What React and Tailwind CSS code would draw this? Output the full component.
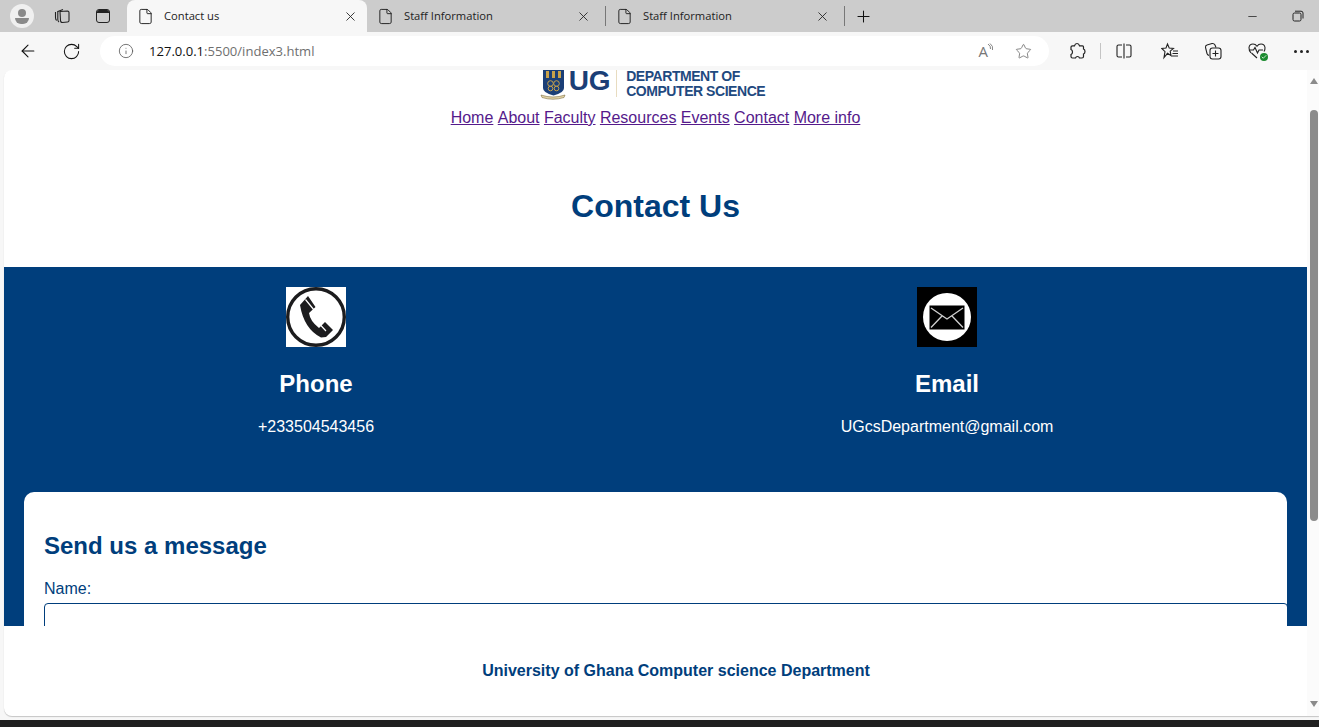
import React from 'react';
import { ArrowLeft, RotateCw, Info, File, X, Plus, Minus, Star, Check } from 'lucide-react';

const BLUE = 'text-[#003e7c]';

function Tab({ title, active, sep }) {
  return (
    <div className={`flex items-center h-[32px] relative ${active ? 'w-[240px] bg-[#f7f7f7] rounded-t-lg pl-[10px] pr-[9px]' : 'w-[239px] pl-[10px] pr-[15px]'}`}>
      <File size={17} strokeWidth={1.3} className="text-[#1a1a1a] shrink-0" />
      <span className="ml-[10px] text-[11.2px] text-[#222] flex-1 font-['Open_Sans',sans-serif]">{title}</span>
      <X size={15} strokeWidth={1.4} className="text-[#222]" />
      {sep && <div className="absolute right-0 top-[6px] h-[20px] w-px bg-[#777]"></div>}
    </div>
  );
}

function CollectionsIcon() {
  return (
    <svg width="18" height="18" viewBox="0 0 18 18" fill="none" stroke="#222" strokeWidth="1.1">
      <path d="M7 4.5 L14.5 4 Q16 4 16 5.5 L16 13.5 Q16 15 14.5 15 L9.5 15.5 Q7.5 15.5 7.5 13.5 Z" />
      <path d="M4.8 4 L4.8 12.5 Q4.8 14 6 15" />
      <path d="M2.5 5 L2.5 10.5 Q2.5 12.5 3.6 13.5" />
      <path d="M4.8 4.5 L10 2.5" />
    </svg>
  );
}

function Crest() {
  return (
    <svg width="26" height="30" viewBox="0 0 26 30" className="block shrink-0">
      <path d="M3 0 H24 V18 Q24 23 13.5 25.5 Q3 23 3 18 Z" fill="#1b3f77" />
      <rect x="6" y="1" width="3" height="7" fill="#c8a24a" />
      <rect x="12" y="1" width="3" height="7" fill="#c8a24a" />
      <rect x="18" y="1" width="3" height="7" fill="#c8a24a" />
      <circle cx="10.5" cy="13.5" r="2.8" fill="none" stroke="#c8a24a" strokeWidth="1" />
      <circle cx="16.5" cy="13.5" r="2.8" fill="none" stroke="#c8a24a" strokeWidth="1" />
      <circle cx="10.5" cy="18.5" r="2.3" fill="none" stroke="#c8a24a" strokeWidth="1" />
      <circle cx="16.5" cy="18.5" r="2.3" fill="none" stroke="#c8a24a" strokeWidth="1" />
      <path d="M1 25 Q13 29 25 25 L24 27.5 Q13 31 2 27.5 Z" fill="#e3d4a8" stroke="#6b5a2a" strokeWidth="0.5" />
    </svg>
  );
}

function PhoneTile() {
  return (
    <svg width="60" height="60" viewBox="0 0 60 60" className="block">
      <rect width="60" height="60" fill="#fff" />
      <circle cx="30" cy="30" r="28.3" fill="none" stroke="#1c1c1e" strokeWidth="3.4" />
      <path d="M14 18 L22 9 L29.5 20 L23 26 Q24 34 33 41 L39 35 L47 43 L40 50 L35 50.5 Q18 42 14 18 Z" fill="#1c1c1e" />
      <path d="M19.5 12.5 L28 23 M33.5 37 L40 44" stroke="#fff" strokeWidth="1.2" />
    </svg>
  );
}

function MailTile() {
  return (
    <svg width="60" height="60" viewBox="0 0 60 60" className="block">
      <rect width="60" height="60" fill="#000" />
      <circle cx="30" cy="30" r="24" fill="#fff" />
      <rect x="12.5" y="18.5" width="35" height="24" fill="#000" />
      <path d="M14 21 L30 32 L46 21 M14 40.5 L25 29 M46 40.5 L35 29" fill="none" stroke="#d0d0d0" strokeWidth="1.3" />
    </svg>
  );
}

function BrowserChrome() {
  return (
    <>
      <div className="h-[32px] bg-[#cccccc] flex items-end shrink-0">
        <div className="w-[127px] h-[32px] flex items-center shrink-0">
          <div className="ml-[10px] w-[24px] h-[24px] rounded-full bg-[#f0f0f0] flex flex-col items-center justify-center">
            <div className="w-[8px] h-[8px] rounded-full bg-[#8a8a8a]"></div>
            <div className="w-[14px] h-[6px] mt-[1px] rounded-b-full rounded-t-sm bg-[#8a8a8a]"></div>
          </div>
          <div className="ml-[19px]"><CollectionsIcon /></div>
          <div className="ml-[25px] w-[14px] h-[14px] border border-[#222] rounded-[3px] overflow-hidden">
            <div className="h-[3px] bg-[#222]"></div>
          </div>
        </div>
        <Tab title="Contact us" active />
        <Tab title="Staff Information" sep />
        <Tab title="Staff Information" sep />
        <div className="h-[32px] flex items-center ml-[9px] shrink-0">
          <Plus size={19} strokeWidth={1.3} className="text-[#111]" />
        </div>
        <div className="flex-1"></div>
        <div className="h-[32px] flex items-center pr-[15px] gap-[33px] shrink-0">
          <Minus size={13} strokeWidth={1.3} className="text-[#111]" />
          <svg width="12" height="12" viewBox="0 0 12 12" fill="none" stroke="#222" strokeWidth="1">
            <rect x="1" y="3" width="8" height="8" rx="1.5" />
            <path d="M3 1.2 H9 Q11 1.2 11 3 V8.5" />
          </svg>
        </div>
      </div>

      <div className="h-[38px] bg-[#f7f7f7] flex items-center shrink-0">
        <div className="w-[100px] flex items-center shrink-0">
          <ArrowLeft size={20} strokeWidth={1.3} className="ml-[18px] text-[#111]" />
          <RotateCw size={19} strokeWidth={1.3} className="ml-[24px] text-[#111]" />
        </div>
        <div className="w-[949px] h-[30px] bg-white rounded-full flex items-center shrink-0">
          <Info size={16} strokeWidth={1.2} className="ml-[18px] text-[#555]" />
          <span className="ml-[15px] pt-[1px] text-[13.05px] text-[#6f6f6f] flex-1 font-['Open_Sans',sans-serif]">
            <span className="text-[#111]">127.0.0.1</span>:5500/index3.html
          </span>
          <span className="relative text-[15px] leading-none text-[#777] font-['Open_Sans',sans-serif]">A
            <svg width="7" height="9" viewBox="0 0 7 9" fill="none" stroke="#777" strokeWidth="0.9" className="absolute -right-[6px] -top-[1px]">
              <path d="M1 1 Q4 3 3.5 6 M3 0.5 Q6.5 3 5.5 7" />
            </svg>
          </span>
          <Star size={17} strokeWidth={1.1} className="ml-[27px] mr-[17px] text-[#666]" />
        </div>
        <div className="flex items-center shrink-0">
          <svg width="18" height="18" viewBox="0 0 18 18" fill="none" stroke="#222" strokeWidth="1.2" className="ml-[19px]">
            <path d="M6.5 3.8 Q7 1.5 9 1.5 Q11 1.5 11.5 3.8 H14.5 Q15.5 3.8 15.5 5 V7 Q17 7.5 17 9.5 Q17 11.5 15.5 12 V14.5 Q15.5 16 14 16 H11.5 Q11 14.5 9.5 14.5 Q8 14.5 7.5 16 H4.5 Q3 16 3 14.5 V12.5 Q4.5 12 4.5 10 Q4.5 8 3 7.5 V5 Q3 3.8 4.5 3.8 Z" />
          </svg>
          <div className="ml-[14px] w-px h-[16px] bg-[#c4c4c4]"></div>
          <svg width="16" height="16" viewBox="0 0 16 16" fill="none" stroke="#222" strokeWidth="1.1" className="ml-[15px]">
            <path d="M6 2 H2.5 Q1 2 1 3.5 V12.5 Q1 14 2.5 14 H6 M10 2 H13.5 Q15 2 15 3.5 V12.5 Q15 14 13.5 14 H10 M8 0.5 V15.5" />
          </svg>
          <svg width="18" height="18" viewBox="0 0 18 18" fill="none" stroke="#222" strokeWidth="1.1" className="ml-[29px]">
            <path d="M6.5 2 L8.2 6 L12.5 6.4 L9.2 9.2 L10 13.5 L6.5 11.3 L3 15.5 L4 9.6 L0.8 6.4 L5 6 Z" />
            <path d="M12 9 H17 M11.5 11.5 H17 M10.5 14 H17" />
          </svg>
          <svg width="18" height="18" viewBox="0 0 18 18" fill="none" stroke="#222" strokeWidth="1.1" className="ml-[25px]">
            <path d="M5 13.5 Q3.5 13 3 11.5 L1.5 5.5 Q1.2 3.5 3 3 L8 1.5 Q10 1.2 11 3 L12 5.5" />
            <rect x="6" y="6" width="11" height="11" rx="2.5" />
            <path d="M11.5 8.5 V14.5 M8.5 11.5 H14.5" />
          </svg>
          <div className="relative ml-[26px] w-[18px] h-[18px]">
            <svg width="18" height="18" viewBox="0 0 18 18" fill="none" stroke="#222" strokeWidth="1.1">
              <path d="M3 11 Q0.8 8.5 1 5.5 Q1.5 2 5 2 Q7.5 2 9 4.2 Q10.5 2 13 2 Q16.5 2 17 5.5 Q17.2 7.5 16 9.5 M9 16 L3.5 11" />
              <path d="M1 8 H5.5 L7 5.5 L9.5 11 L11 8 H15" />
            </svg>
            <div className="absolute -right-[2px] bottom-[-1px] w-[8px] h-[8px] rounded-full bg-[#1a8a2e] flex items-center justify-center">
              <Check size={6} strokeWidth={3} className="text-white" />
            </div>
          </div>
          <div className="ml-[28px] flex gap-[3px]">
            <div className="w-[3px] h-[3px] rounded-full bg-[#222]"></div>
            <div className="w-[3px] h-[3px] rounded-full bg-[#222]"></div>
            <div className="w-[3px] h-[3px] rounded-full bg-[#222]"></div>
          </div>
        </div>
      </div>
    </>
  );
}

function Scrollbar() {
  return (
    <div className="w-[12px] bg-[#fbfbfb] flex flex-col items-center shrink-0 pl-[2px]">
      <div className="mt-[8px] w-0 h-0 border-l-[4px] border-r-[4px] border-b-[6px] border-l-transparent border-r-transparent border-b-[#8b8b8b]"></div>
      <div className="mt-[26px] w-[8px] h-[411px] bg-[#8b8b8b] rounded-full"></div>
      <div className="flex-1"></div>
      <div className="mb-[9px] w-0 h-0 border-l-[4px] border-r-[4px] border-t-[6px] border-l-transparent border-r-transparent border-t-[#8b8b8b]"></div>
    </div>
  );
}

export default function App() {
  const links = ['Home', 'About', 'Faculty', 'Resources', 'Events', 'Contact', 'More info'];
  return (
    <div className="w-[1319px] h-[727px] overflow-hidden bg-[#f7f7f7] flex flex-col font-['Liberation_Sans',Arial,sans-serif]">
      <BrowserChrome />
      <div className="flex-1 min-h-0 pl-[4px] pb-[4px]">
        <div className="h-full bg-white rounded-bl-lg rounded-tl-lg flex shadow-[0_1px_1px_rgba(0,0,0,0.2)]">
          <div className="w-[1303px] flex flex-col shrink-0">
            <div className="h-[32px] pr-[6px] flex justify-center items-start shrink-0">
              <div className="flex items-start">
                <Crest />
                <span className="ml-[3px] text-[28px] leading-[22px] font-bold text-[#1b3f77] tracking-[-0.3px]">UG</span>
                <div className="ml-[6px] w-px h-[27px] bg-[#e8dcc0]"></div>
                <div className="ml-[9px] text-[14px] font-bold text-[#1f4a80] tracking-[-0.45px]">
                  <div className="leading-[12px]">DEPARTMENT OF</div>
                  <div className="mt-[2.5px] leading-[12px]">COMPUTER SCIENCE</div>
                </div>
              </div>
            </div>
            <nav className="mt-[7px] h-[18px] flex justify-center gap-[4.4px] text-[16px] leading-[18px] text-[#551a8b] shrink-0">
              {links.map((l) => (
                <a key={l} href="#" className="underline">{l}</a>
              ))}
            </nav>
            <h1 className={`mt-[61px] text-[32px] leading-[37px] font-bold text-center shrink-0 ${BLUE}`}>Contact Us</h1>
            <div className="mt-[42px] flex-1 min-h-0 bg-[#003e7c] overflow-hidden px-[20px] pt-[20px]">
              <div className="-mx-[20px] grid grid-cols-[624px_624px] gap-x-[7px] text-white text-center">
                <div className="flex flex-col items-center">
                  <PhoneTile />
                  <h2 className="mt-[23px] text-[24px] leading-[28px] font-bold">Phone</h2>
                  <p className="mt-[20px] text-[16px] leading-[18px]">+233504543456</p>
                </div>
                <div className="flex flex-col items-center">
                  <MailTile />
                  <h2 className="mt-[23px] text-[24px] leading-[28px] font-bold">Email</h2>
                  <p className="mt-[20px] text-[16px] leading-[18px]">UGcsDepartment@gmail.com</p>
                </div>
              </div>
              <div className={`mt-[56px] bg-white rounded-[10px] w-[1263px] h-[200px] p-[20px] ${BLUE}`}>
                <h2 className="mt-[20px] text-[24px] leading-[28px] font-bold">Send us a message</h2>
                <label className="block mt-[20px] text-[16px] leading-[18px]">Name:</label>
                <div className="mt-[5px] w-[1244px] h-[40px] border border-[#003e7c] rounded-[4px]"></div>
              </div>
            </div>
            <footer className={`h-[90px] pl-[41px] flex items-center justify-center text-[16px] font-bold shrink-0 ${BLUE}`}>
              University of Ghana Computer science Department
            </footer>
          </div>
          <Scrollbar />
        </div>
      </div>
      <div className="h-[7px] bg-[#1f1f1f] shrink-0"></div>
    </div>
  );
}
